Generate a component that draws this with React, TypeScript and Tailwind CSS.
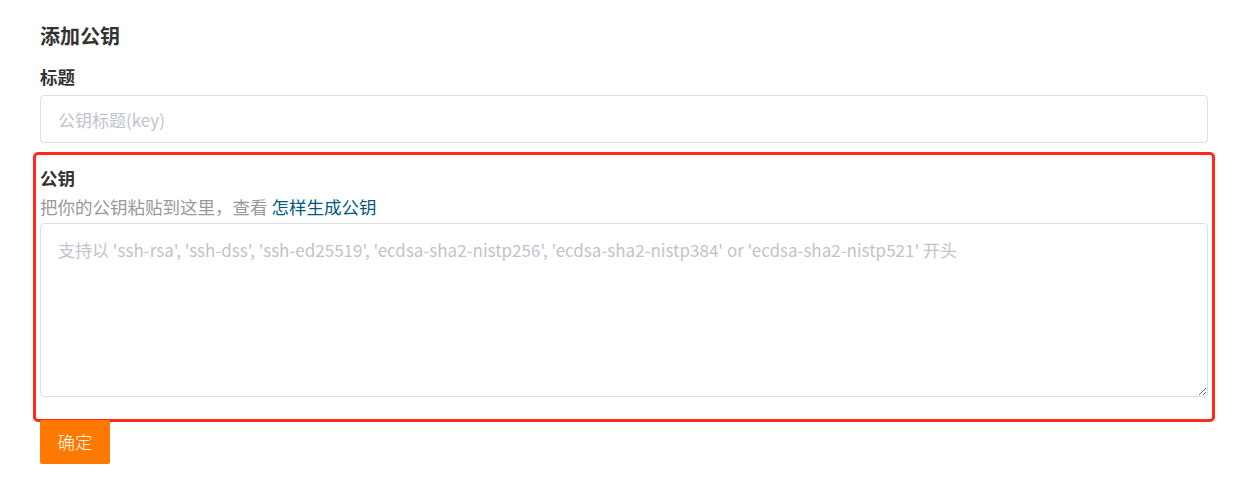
import React from "react";

export default function App() {
  const font = { fontFamily: '"Noto Sans CJK SC", "Noto Sans", sans-serif' };
  return (
    <div className="min-h-[496px] bg-white" style={font}>
      <div className="ml-10 w-[1168px] pt-[22px]">
        <h2 className="h-[28px] text-[20px] leading-[28px] font-bold text-[#333]">添加公钥</h2>
        <div className="mt-[15px] h-[24px] text-[17.5px] leading-[24px] font-bold text-[#333]">标题</div>
        <input
          className="mt-[6px] block h-[48px] w-full rounded-[4px] border border-[#dcdfe6] px-[17px] text-[17px] text-[#333] outline-none placeholder:text-[#c0c4cc]"
          placeholder="公钥标题(key)"
        />
        <div className="-mx-[7px] mt-[9px] rounded-[5px] border-[3px] border-[#ff2a1a] px-[4px] pt-[11px] pb-[22px]">
          <div className="h-[24px] text-[17.5px] leading-[24px] font-bold text-[#333]">公钥</div>
          <div className="mt-[5px] h-[24px] text-[17.5px] leading-[24px] text-[#999]">
            把你的公钥粘贴到这里，查看 <a className="text-[#005980]">怎样生成公钥</a>
          </div>
          <textarea
            className="mt-[4px] block h-[174px] w-full rounded-[4px] border border-[#dcdfe6] px-[17px] pt-[14px] text-[17px] leading-[24px] text-[#333] outline-none placeholder:text-[#c0c4cc]"
            placeholder="支持以 'ssh-rsa', 'ssh-dss', 'ssh-ed25519', 'ecdsa-sha2-nistp256', 'ecdsa-sha2-nistp384' or 'ecdsa-sha2-nistp521' 开头"
          />
        </div>
        <button className="relative -mt-[2px] block h-[44px] w-[70px] rounded-[2px] bg-[#ff7800] text-[17.5px] font-light text-white">
          确定
        </button>
      </div>
    </div>
  );
}
